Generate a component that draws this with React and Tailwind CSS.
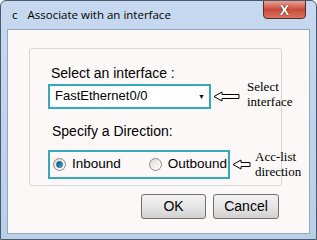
import { useState } from "react";

const HollowArrow = ({ width = 27 }) => (
  <svg width={width} height="11" viewBox={`0 0 ${width} 11`} className="shrink-0">
    <path
      d={`M1 5.5 L9 1 L9 3.5 L${width - 1} 3.5 L${width - 1} 7.5 L9 7.5 L9 10 Z`}
      fill="white"
      stroke="black"
      strokeWidth="1"
      strokeLinejoin="miter"
    />
  </svg>
);

const Radio = ({ checked }) => (
  <span className="w-[13px] h-[13px] shrink-0 rounded-full border border-[#8a8a8a] bg-gradient-to-br from-[#dcdcdc] to-[#fdfdfd] flex items-center justify-center">
    {checked && (
      <span className="w-[7px] h-[7px] rounded-full bg-gradient-to-br from-[#0b4c7a] to-[#39b3e8] border border-[#1d5c85]"></span>
    )}
  </span>
);

const App = () => {
  const [direction, setDirection] = useState("in");

  return (
    <div
      className="w-[317px] h-[240px] bg-gradient-to-b from-[#c6d9f0] to-[#b9cfe8] border border-[#4a5a6e] rounded-t-[6px] flex flex-col overflow-hidden"
      style={{ fontFamily: '"Liberation Sans", Arial, sans-serif' }}
    >
      {/* title bar */}
      <div className="h-[28px] flex items-start shrink-0">
        <div
          className="flex items-center h-[28px] pl-[11px] gap-[10px] text-[11.5px] text-black"
          style={{ fontFamily: '"Open Sans", "Noto Sans", sans-serif' }}
        >
          <span>c</span>
          <span>Associate with an interface</span>
        </div>
        <div className="ml-auto mr-[10px] w-[43px] h-[19px] -mt-px rounded-b-[4px] border border-[#5b2a26] bg-gradient-to-b from-[#e8a093] via-[#c84a3a] to-[#d9745e] flex items-center justify-center">
          <span className="text-white font-bold text-[14px] leading-none" style={{ textShadow: "0 0 1px #3a1410, 0 0 1px #3a1410" }}>
            X
          </span>
        </div>
      </div>

      {/* client area */}
      <div className="mx-[6px] h-[205px] bg-[#fcf8f8] border border-[#93a9c3] pt-[18px] pl-[21px] pr-[25px]">
        <div className="w-[253px] h-[138px] border border-[#d6d6d6] rounded-[3px] pt-[16px] pl-[18px] text-[14px] text-black">
          <div className="pl-[3px] leading-[16px]">Select an interface :</div>
          <div className="flex items-center mt-[2px]">
            <div className="w-[163px] h-[25px] shrink-0 border-2 border-[#33aabb] bg-white flex items-center pl-[5px] pr-[4px] text-[13px]">
              <span>FastEthernet0/0</span>
              <span className="ml-auto text-[7px] leading-none">▼</span>
            </div>
            <div className="ml-[2px] shrink-0">
              <HollowArrow width={27} />
            </div>
            <div
              className="ml-[7px] -mt-[4px] shrink-0 whitespace-nowrap text-[13px] leading-[15px]"
              style={{ fontFamily: '"Liberation Serif", "Times New Roman", serif' }}
            >
              <div>Select</div>
              <div>interface</div>
            </div>
          </div>

          <div className="pl-[4px] mt-[14px] leading-[16px]">Specify a Direction:</div>
          <div className="flex items-center mt-[11px]">
            <div className="w-[182px] h-[29px] shrink-0 border-2 border-[#33aabb] flex items-center pl-[3px] text-[13.5px]">
              <label className="flex items-center gap-[6px] cursor-pointer" onClick={() => setDirection("in")}>
                <Radio checked={direction === "in"} />
                <span>Inbound</span>
              </label>
              <label className="flex items-center gap-[6px] ml-[28px] cursor-pointer" onClick={() => setDirection("out")}>
                <Radio checked={direction === "out"} />
                <span>Outbound</span>
              </label>
            </div>
            <div className="ml-[2px] shrink-0">
              <HollowArrow width={19} />
            </div>
            <div
              className="ml-[4px] -mt-[2px] shrink-0 whitespace-nowrap text-[13px] leading-[15px]"
              style={{ fontFamily: '"Liberation Serif", "Times New Roman", serif' }}
            >
              <div>Acc-list</div>
              <div>direction</div>
            </div>
          </div>
        </div>

        <div className="flex justify-end gap-[7px] mt-[8px] pr-[5px] text-[14px]">
          <button className="w-[65px] h-[25px] border border-[#707070] rounded-[3px] bg-gradient-to-b from-[#f2f2f2] via-[#e6e6e6] to-[#d0d0d0]">
            OK
          </button>
          <button className="w-[66px] h-[25px] border border-[#707070] rounded-[3px] bg-gradient-to-b from-[#f2f2f2] via-[#e6e6e6] to-[#d0d0d0]">
            Cancel
          </button>
        </div>
      </div>
    </div>
  );
};

export default App;
